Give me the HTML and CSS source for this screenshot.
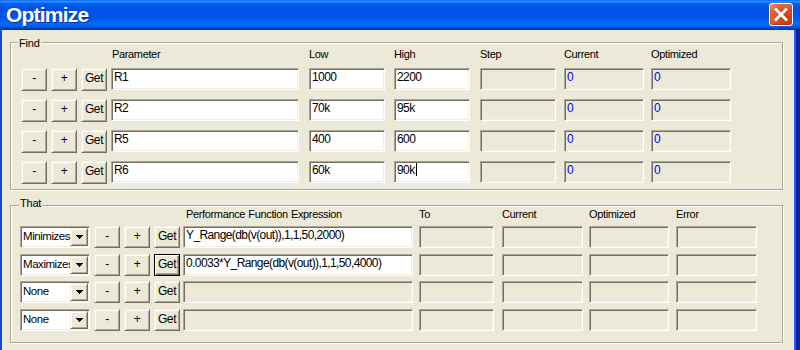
FILE: index.html
```html
<!DOCTYPE html>
<html>
<head>
<meta charset="utf-8">
<title>Optimize</title>
<link rel="stylesheet" href="styles.css">
</head>
<body>
<div class="window">
  <div class="titlebar">
    <div class="title">Optimize</div>
    <div class="close">
      <svg width="22" height="21" viewBox="0 0 22 21"><path d="M6 5.5 L16 15.5 M16 5.5 L6 15.5" stroke="#fff" stroke-width="2.8" stroke-linecap="square" fill="none"/></svg>
    </div>
  </div>
  <div class="content">
    <div class="group find">
      <span class="legend">Find</span>
      <div class="find-grid">
        <div class="hdr span3"></div>
        <div class="hdr pl1">Parameter</div>
        <div class="hdr">Low</div>
        <div class="hdr">High</div>
        <div class="hdr">Step</div>
        <div class="hdr">Current</div>
        <div class="hdr">Optimized</div>

        <div class="btn">-</div><div class="btn">+</div><div class="btn">Get</div>
        <div class="field w188">R1</div>
        <div class="field w76">1000</div>
        <div class="field w76">2200</div>
        <div class="field ro w76"></div>
        <div class="field ro blue w80">0</div>
        <div class="field ro blue w80">0</div>

        <div class="btn">-</div><div class="btn">+</div><div class="btn">Get</div>
        <div class="field w188">R2</div>
        <div class="field w76">70k</div>
        <div class="field w76">95k</div>
        <div class="field ro w76"></div>
        <div class="field ro blue w80">0</div>
        <div class="field ro blue w80">0</div>

        <div class="btn">-</div><div class="btn">+</div><div class="btn">Get</div>
        <div class="field w188">R5</div>
        <div class="field w76">400</div>
        <div class="field w76">600</div>
        <div class="field ro w76"></div>
        <div class="field ro blue w80">0</div>
        <div class="field ro blue w80">0</div>

        <div class="btn">-</div><div class="btn">+</div><div class="btn">Get</div>
        <div class="field w188">R6</div>
        <div class="field w76">60k</div>
        <div class="field w76">90k<span class="caret"></span></div>
        <div class="field ro w76"></div>
        <div class="field ro blue w80">0</div>
        <div class="field ro blue w80">0</div>
      </div>
    </div>

    <div class="group that">
      <span class="legend">That</span>
      <div class="that-grid">
        <div class="hdr span4"></div>
        <div class="hdr pl3">Performance Function Expression</div>
        <div class="hdr">To</div>
        <div class="hdr">Current</div>
        <div class="hdr">Optimized</div>
        <div class="hdr">Error</div>

        <div class="combo"><div class="combo-text">Minimizes</div><div class="drop"><svg width="7" height="4" viewBox="0 0 7 4"><path d="M0 0h7v1H0z M1 1h5v1H1z M2 2h3v1H2z M3 3h1v1H3z" fill="#000"/></svg></div></div>
        <div class="btn sm">-</div><div class="btn sm">+</div><div class="btn sm">Get</div>
        <div class="field w230">Y_Range(db(v(out)),1,1,50,2000)</div>
        <div class="field ro w75"></div>
        <div class="field ro w81"></div>
        <div class="field ro w80"></div>
        <div class="field ro w81"></div>

        <div class="combo"><div class="combo-text">Maximizes</div><div class="drop"><svg width="7" height="4" viewBox="0 0 7 4"><path d="M0 0h7v1H0z M1 1h5v1H1z M2 2h3v1H2z M3 3h1v1H3z" fill="#000"/></svg></div></div>
        <div class="btn sm">-</div><div class="btn sm">+</div><div class="btn sm default">Get</div>
        <div class="field w230">0.0033*Y_Range(db(v(out)),1,1,50,4000)</div>
        <div class="field ro w75"></div>
        <div class="field ro w81"></div>
        <div class="field ro w80"></div>
        <div class="field ro w81"></div>

        <div class="combo"><div class="combo-text">None</div><div class="drop"><svg width="7" height="4" viewBox="0 0 7 4"><path d="M0 0h7v1H0z M1 1h5v1H1z M2 2h3v1H2z M3 3h1v1H3z" fill="#000"/></svg></div></div>
        <div class="btn sm">-</div><div class="btn sm">+</div><div class="btn sm">Get</div>
        <div class="field ro w230"></div>
        <div class="field ro w75"></div>
        <div class="field ro w81"></div>
        <div class="field ro w80"></div>
        <div class="field ro w81"></div>

        <div class="combo"><div class="combo-text">None</div><div class="drop"><svg width="7" height="4" viewBox="0 0 7 4"><path d="M0 0h7v1H0z M1 1h5v1H1z M2 2h3v1H2z M3 3h1v1H3z" fill="#000"/></svg></div></div>
        <div class="btn sm">-</div><div class="btn sm">+</div><div class="btn sm">Get</div>
        <div class="field ro w230"></div>
        <div class="field ro w75"></div>
        <div class="field ro w81"></div>
        <div class="field ro w80"></div>
        <div class="field ro w81"></div>
      </div>
    </div>
  </div>
</div>
</body>
</html>
```

FILE: styles.css
```css
* { box-sizing: border-box; }
html, body { margin: 0; padding: 0; }
body {
  width: 800px;
  height: 350px;
  overflow: hidden;
  background: #ece9d8;
  font-family: "Liberation Sans", Arial, sans-serif;
  font-size: 11px;
  color: #000;
}
.window {
  width: 800px;
  height: 350px;
  display: flex;
  flex-direction: column;
}
.titlebar {
  height: 30px;
  flex: none;
  display: flex;
  align-items: center;
  justify-content: space-between;
  padding: 0 7px 1px 6px;
  background: linear-gradient(to bottom, #0058ee 0%, #3a93ff 4%, #288eff 6%, #127dff 8%, #036ffc 10%, #0262ee 14%, #0057e5 20%, #0054e3 24%, #0055eb 56%, #005bf5 66%, #026afe 76%, #0062ef 86%, #0052d6 92%, #0040ab 96%, #003092 100%);
}
.title {
  font-weight: bold;
  font-size: 21px;
  line-height: 30px;
  letter-spacing: -0.8px;
  color: #fff;
  text-shadow: 1px 1px 0 #0a2a9a;
}
.close {
  width: 24px;
  height: 23px;
  border: 1px solid #fff;
  border-radius: 3px;
  background: radial-gradient(circle at 75% 75%, #c43a0e 0%, #d9502a 45%, #e2683e 70%, #f0a080 100%);
  box-shadow: inset 0 -1px 2px #b83000;
  display: flex;
  align-items: center;
  justify-content: center;
}
.close svg { display: block; }
.content {
  flex: 1;
  background: #ece9d8;
  border-left: 2px solid #0c4ae2;
  border-right: 4px solid #0a22a4;
  box-shadow: inset -2px 0 0 #2a5ae8;
  padding: 12px 0 0 8px;
}
.group {
  position: relative;
  width: 773px;
  border: 1px solid #aca899;
  box-shadow: inset 1px 1px 0 #fff, 1px 1px 0 #fff;
}
.find {
  height: 148px;
  padding: 5px 0 0 10px;
}
.that {
  height: 138px;
  margin-top: 15px;
  padding: 2px 0 0 9px;
}
.legend {
  position: absolute;
  top: -6px;
  left: 7px;
  padding: 0 1px;
  background: #ece9d8;
  line-height: 13px;
  letter-spacing: -0.2px;
}
.that .legend { top: -9px; left: 8px; }

.find-grid {
  display: grid;
  grid-template-columns: 30px 30px 30px 198px 85px 86px 84px 87px 80px;
  grid-template-rows: 20px 31px 31px 31px 23px;
  align-items: start;
}
.that-grid {
  display: grid;
  grid-template-columns: 74px 30px 30px 29px 236px 83px 87px 87px 81px;
  grid-template-rows: 18px 28px 27px 28px 22px;
  align-items: start;
}
.hdr {
  line-height: 13px;
  letter-spacing: -0.35px;
  word-spacing: 0.5px;
  white-space: nowrap;
}
.span3 { grid-column: span 3; }
.span4 { grid-column: span 4; }
.pl1 { padding-left: 1px; }
.pl3 { padding-left: 3px; }

.field {
  height: 22px;
  border: 1px solid;
  border-color: #aca899 #fff #fff #aca899;
  box-shadow: inset 1px 1px 0 #716f64, inset -1px -1px 0 #f1efe2;
  background: #fff;
  font-size: 12px;
  letter-spacing: -0.6px;
  line-height: 14px;
  padding: 1px 0 0 2px;
  white-space: nowrap;
  overflow: hidden;
}
.ro { background: #ece9d8; }
.blue { color: #0000ff; }
.w188 { width: 188px; }
.w76 { width: 76px; }
.w75 { width: 75px; }
.w80 { width: 80px; }
.w81 { width: 81px; }
.w230 { width: 230px; }
.caret {
  display: inline-block;
  width: 1px;
  height: 13px;
  margin-left: 1px;
  background: #000;
  vertical-align: -2px;
}

.btn {
  width: 26px;
  height: 23px;
  background: #ece9d8;
  border: 1px solid;
  border-color: #f1efe2 #716f64 #716f64 #f1efe2;
  box-shadow: inset 1px 1px 0 #fff, inset -1px -1px 0 #aca899;
  display: flex;
  align-items: center;
  justify-content: center;
  padding-bottom: 2px;
  font-size: 12px;
  line-height: 13px;
  letter-spacing: -0.4px;
}
.btn.sm { height: 22px; }
.btn.default {
  border-color: #000;
  box-shadow: inset 1px 1px 0 #fff, inset -1px -1px 0 #716f64, inset -2px -2px 0 #aca899;
}

.combo {
  width: 70px;
  height: 22px;
  border: 1px solid;
  border-color: #aca899 #fff #fff #aca899;
  box-shadow: inset 1px 1px 0 #716f64, inset -1px -1px 0 #f1efe2;
  background: #fff;
  padding: 1px;
  display: flex;
}
.combo-text {
  flex: 1;
  min-width: 0;
  overflow: hidden;
  white-space: nowrap;
  padding-left: 1px;
  font-size: 11.5px;
  line-height: 16px;
  letter-spacing: -0.45px;
}
.drop {
  width: 18px;
  height: 18px;
  flex: none;
  background: #ece9d8;
  border: 1px solid;
  border-color: #f1efe2 #716f64 #716f64 #f1efe2;
  box-shadow: inset 1px 1px 0 #fff, inset -1px -1px 0 #aca899;
  display: flex;
  align-items: center;
  justify-content: center;
  padding-bottom: 1px;
}
.drop svg { display: block; }
```
